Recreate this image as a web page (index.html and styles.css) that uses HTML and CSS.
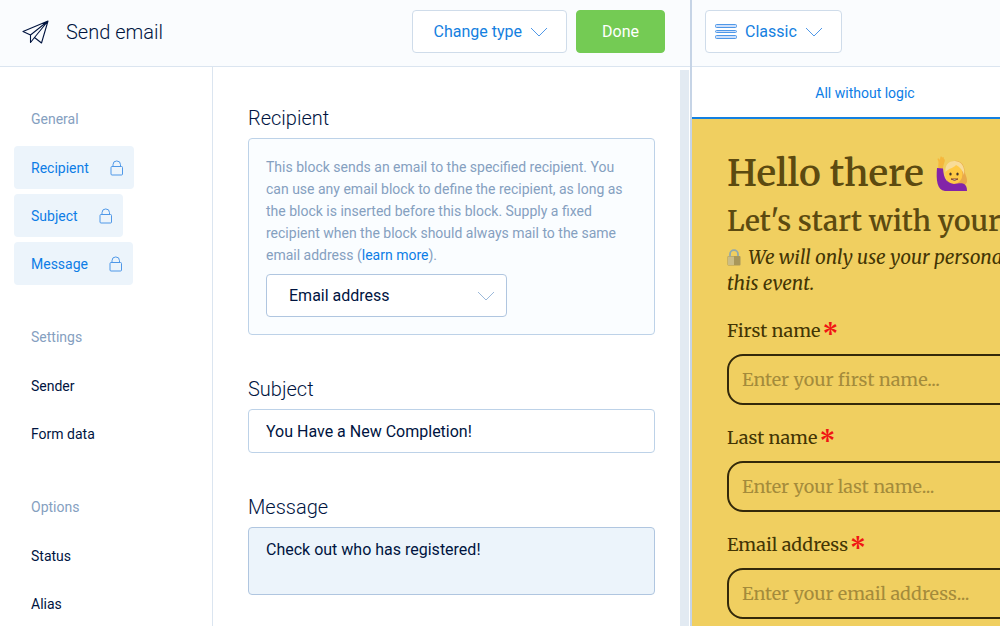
FILE: index.html
```html
<!DOCTYPE html>
<html lang="en">
<head>
    <meta charset="UTF-8">
    <meta name="viewport" content="width=device-width, initial-scale=1.0">
    <title>Send email</title>
    <link rel="stylesheet" href="styles.css">
</head>
<body>
    <div class="editor">
        <header class="topbar">
            <svg class="plane" width="28" height="26" viewBox="0 0 28 26">
                <path d="M26 2 1 12.500l7.500 3.500L26 2 8.500 16v7.500l4-5M26 2 12.500 18.500l7 5.500L26 2" />
            </svg>
            <h1>Send email</h1>
            <button class="btn change-type">Change type
                <svg class="chevron" width="18" height="10" viewBox="0 0 18 10"><path d="M1 1l8 8 8-8" /></svg>
            </button>
            <button class="btn done">Done</button>
        </header>
        <div class="editor-body">
            <nav class="sidebar">
                <div class="group">
                    <h3>General</h3>
                    <button class="item active">Recipient
                        <svg class="lock" width="14" height="16" viewBox="0 0 14 16"><rect x="1" y="6.500" width="11.500" height="8.500" rx="1" /><path d="M3 6.500V4.700a3.750 3.750 0 0 1 7.500 0v1.800" /></svg>
                    </button>
                    <button class="item active">Subject
                        <svg class="lock" width="14" height="16" viewBox="0 0 14 16"><rect x="1" y="6.500" width="11.500" height="8.500" rx="1" /><path d="M3 6.500V4.700a3.750 3.750 0 0 1 7.500 0v1.800" /></svg>
                    </button>
                    <button class="item active">Message
                        <svg class="lock" width="14" height="16" viewBox="0 0 14 16"><rect x="1" y="6.500" width="11.500" height="8.500" rx="1" /><path d="M3 6.500V4.700a3.750 3.750 0 0 1 7.500 0v1.800" /></svg>
                    </button>
                </div>
                <div class="group">
                    <h3>Settings</h3>
                    <button class="item">Sender</button>
                    <button class="item">Form data</button>
                </div>
                <div class="group">
                    <h3>Options</h3>
                    <button class="item">Status</button>
                    <button class="item">Alias</button>
                </div>
            </nav>
            <main class="settings">
                <section>
                    <label class="title" for="recipient">Recipient</label>
                    <div class="card">
                        <p>This block sends an email to the specified recipient. You can use any email block to define the recipient, as long as the block is inserted before this block. Supply a fixed recipient when the block should always mail to the same email address (<a href="#">learn more</a>).</p>
                        <div class="select">
                            <select id="recipient">
                                <option>Email address</option>
                            </select>
                            <svg class="chevron" width="18" height="10" viewBox="0 0 18 10"><path d="M1 1l8 8 8-8" /></svg>
                        </div>
                    </div>
                </section>
                <section>
                    <label class="title" for="subject">Subject</label>
                    <input class="field" id="subject" type="text" value="You Have a New Completion!">
                </section>
                <section>
                    <label class="title" for="message">Message</label>
                    <textarea class="field" id="message">Check out who has registered!</textarea>
                </section>
            </main>
            <div class="scrollbar"></div>
        </div>
    </div>

    <div class="preview">
        <header class="topbar">
            <button class="btn classic">
                <svg class="lines" width="22" height="16" viewBox="0 0 22 16"><rect x=".5" y=".5" width="21" height="3" rx="1" /><rect x=".5" y="6.500" width="21" height="2" rx="1" /><rect x=".5" y="11.500" width="21" height="3" rx="1" /></svg>
                Classic
                <svg class="chevron" width="18" height="10" viewBox="0 0 18 10"><path d="M1 1l8 8 8-8" /></svg>
            </button>
        </header>
        <div class="tabs">
            <button class="tab">All without logic</button>
        </div>
        <form class="form">
            <h2>Hello there
                <svg class="emoji" width="32" height="35" viewBox="0 0 32 35">
                    <path fill="#e8a94a" d="M14 7c6-5 14-1 14.500 7 0 4 3 7 2.500 12-1 3-4 4-6 3l-12 1c-3-5-3-18 1-23z" />
                    <ellipse cx="18" cy="18" rx="8.500" ry="10" fill="#ffca45" />
                    <path fill="#f8dc98" d="M9.500 16C8.500 8 14 4.500 19 5c7 .5 10 6 9 14-1-4-4-8-8-10-2 3-7 3-10.500 7z" />
                    <path fill="#f5b73c" d="M2.500 13C2 10 2.500 8 2.500 6L1.500 3c1-1 2 0 2.300 1L4.500.8c1-.8 1.500 0 1.500 1L7 1c1 0 1 1 .8 2C9 3 9 4.500 8.500 6 8 8 7 10 7 13z" />
                    <path fill="#8224a8" d="M1 12l6 .5c.5 5 1 9 3.500 12 2 2 4 3 7.500 3.500 4-.5 6-1 9-.5 3 1 4 3.500 4 7.500H9C1 34 0 24 1 12z" />
                    <ellipse cx="14.500" cy="18" rx="1.200" ry="1.500" fill="#45362c" />
                    <ellipse cx="21.500" cy="18" rx="1.200" ry="1.500" fill="#45362c" />
                    <path fill="#fff" stroke="#85442b" d="M15 23q3.500 3 7 0z" />
                </svg>
            </h2>
            <h4>Let's start with your</h4>
            <p class="note"><svg class="padlock" width="14" height="17" viewBox="0 0 14 17">
                    <path fill="none" stroke="#8fa9ae" stroke-width="1.800" d="M3 8V5.200a4 4 0 0 1 8 0V8" />
                    <rect x=".5" y="7" width="13" height="9.500" rx="1" fill="#a8975a" />
                    <path fill="#cbbd86" d="M1 7.500h6v8.500H1z" />
                </svg> We will only use your personal<br>this event.</p>
            <label for="first">First name<span>*</span></label>
            <input id="first" type="text" placeholder="Enter your first name...">
            <label for="last">Last name<span>*</span></label>
            <input id="last" type="text" placeholder="Enter your last name...">
            <label for="email">Email address<span>*</span></label>
            <input id="email" type="email" placeholder="Enter your email address...">
        </form>
    </div>
</body>
</html>
```
FILE: styles.css
```css
* {
    box-sizing: border-box;
}
body {
    display: flex;
    height: 100vh;
    margin: 0;
    overflow: hidden;
    background-color: #fff;
    color: #00143f;
    font-family: Roboto, "Liberation Sans", sans-serif;
}
h1, h2, h3, h4, p {
    margin: 0;
}
button, input, select, textarea {
    font: inherit;
    color: inherit;
}
button {
    cursor: pointer;
}
svg {
    flex: none;
}
.editor {
    display: flex;
    flex-direction: column;
    flex: none;
    width: 69.2%;
    border-right: 2px solid #c6d4e6;
}
.preview {
    display: flex;
    flex-direction: column;
    flex: 1;
    min-width: 0;
    overflow: hidden;
}

/* top bars */
.topbar {
    display: flex;
    flex: none;
    align-items: center;
    height: 67px;
    padding: 0 25px 3px 22px;
    background-color: #fafcfe;
    border-bottom: 1px solid #dbe5f0;
}
.preview .topbar {
    padding-left: 13px;
}
.topbar h1 {
    flex: 1;
    margin-left: 16px;
    font-size: 20px;
    font-weight: 300;
}
.plane {
    fill: none;
    stroke: #00143f;
    stroke-width: 1.1;
    stroke-linejoin: round;
}
.btn {
    display: flex;
    align-items: center;
    height: 43px;
    padding: 0 18px 0 21px;
    border: 1px solid #cfdcea;
    border-radius: 4px;
    background-color: #fff;
    color: #1480e0;
    font-size: 16px;
    font-weight: 400;
}
.btn .chevron {
    margin-left: 8px;
}
.btn.done {
    margin-left: 9px;
    padding: 0 25px;
    border-color: #74cb54;
    background-color: #74cb54;
    color: #fff;
}
.btn.classic {
    padding-left: 9px;
}
.chevron, .lines, .lock {
    fill: none;
    stroke: #4f98e8;
}
.lines {
    margin-right: 8px;
    fill: #cfe0fa;
}

/* sidebar */
.editor-body {
    display: flex;
    flex: 1;
    min-height: 0;
}
.sidebar {
    display: flex;
    flex: none;
    flex-direction: column;
    gap: 31px;
    width: 213px;
    padding: 31px 0 0 14px;
    border-right: 1px solid #dbe5f0;
    font-size: 14px;
    overflow: hidden;
}
.group {
    display: flex;
    flex-direction: column;
    align-items: flex-start;
    gap: 5px;
}
.group h3 {
    padding: 0 17px;
    color: #85a0bf;
    font-size: 14px;
    font-weight: 400;
    line-height: 43px;
}
.item {
    display: flex;
    align-items: center;
    height: 43px;
    padding: 0 10px 0 17px;
    border: 0;
    border-radius: 4px;
    background-color: transparent;
}
.item.active {
    background-color: #ecf4fb;
    color: #0c7de6;
}
.lock {
    margin-left: 21px;
}

/* settings */
.settings {
    flex: 1;
    min-width: 0;
    padding: 37px 25px 0 35px;
    overflow: hidden;
}
section {
    margin-bottom: 40px;
}
.title {
    display: block;
    margin-bottom: 6px;
    font-size: 20px;
    font-weight: 300;
    line-height: 28px;
}
.card {
    padding: 17px;
    border: 1px solid #bdd2e8;
    border-radius: 4px;
    background-color: #fafdff;
}
.card p {
    margin-bottom: 8px;
    color: #85a0bf;
    font-size: 14px;
    line-height: 22px;
}
.card a {
    color: #0c7de6;
    text-decoration: none;
}
.select {
    display: grid;
    align-items: center;
    width: 241px;
}
.select select {
    grid-area: 1 / 1;
    height: 43px;
    padding: 0 40px 0 22px;
    appearance: none;
    border: 1px solid #b0c6e0;
    border-radius: 4px;
    background-color: #fff;
    font-size: 16px;
}
.select .chevron {
    grid-area: 1 / 1;
    justify-self: end;
    margin-right: 12px;
    stroke: #9cb9da;
    pointer-events: none;
}
.field {
    display: block;
    width: 100%;
    height: 44px;
    padding: 0 17px;
    border: 1px solid #bdd2e8;
    border-radius: 4px;
    background-color: #fff;
    font-size: 16px;
}
textarea.field {
    height: 68px;
    padding: 11px 17px;
    line-height: 22px;
    border-color: #b0c6e0;
    background-color: #ecf4fb;
    resize: none;
}
.scrollbar {
    flex: none;
    width: 9px;
    margin: 3px 1px 0 0;
    background-color: #e2eaf2;
}

/* preview */
.tabs {
    flex: none;
    border-bottom: 2px solid #1480e0;
}
.tab {
    width: 346px;
    height: 50px;
    padding: 2px 0 0;
    border: 0;
    background-color: transparent;
    color: #0c7de6;
    font-size: 14px;
}
.form {
    flex: 1;
    padding: 29px 0 0 35px;
    background-color: #f0cf60;
    color: #433504;
    font-family: Merriweather, "DejaVu Serif Condensed", "DejaVu Serif", serif;
    font-size: 18px;
    white-space: nowrap;
    overflow: hidden;
}
.form h2 {
    display: flex;
    align-items: center;
    gap: 12px;
    color: #5c4a10;
    font-size: 37px;
    font-weight: 600;
    line-height: 50px;
}
.form h4 {
    color: #5c4a10;
    font-size: 28px;
    font-weight: 600;
    line-height: 46px;
}
.note {
    margin-bottom: 22px;
    font-size: 19px;
    font-style: italic;
    line-height: 26px;
}
.padlock {
    margin-right: 3px;
    vertical-align: -2px;
}
.form label {
    display: block;
    margin-bottom: 10px;
    line-height: 26px;
}
.form label span {
    display: inline-block;
    height: 20px;
    margin-left: 2px;
    vertical-align: top;
    color: #f01414;
    font-size: 24px;
    font-weight: 700;
    line-height: 32px;
}
.form input {
    display: block;
    width: 420px;
    height: 51px;
    margin-bottom: 20px;
    padding: 0 13px;
    border: 2px solid #33290a;
    border-radius: 16px;
    background-color: transparent;
}
.form input::placeholder {
    color: #a48b3b;
    opacity: 1;
}
```
